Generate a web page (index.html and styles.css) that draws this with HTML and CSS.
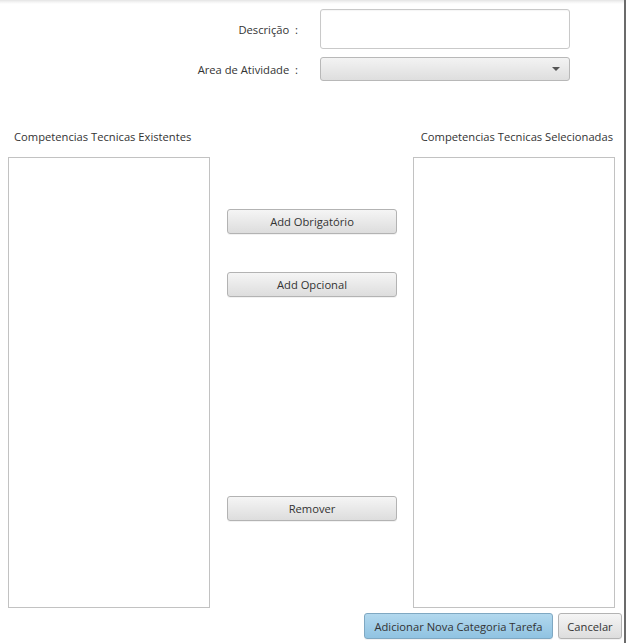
FILE: index.html
```html
<!DOCTYPE html>
<html>
<head>
<meta charset="utf-8">
<link rel="stylesheet" href="styles.css">
</head>
<body>
<div class="window">
  <div class="form">
    <label class="label label-desc">Descrição&nbsp; :</label>
    <div class="textfield"></div>
    <label class="label">Area de Atividade&nbsp; :</label>
    <div class="combo"><span class="arrow"></span></div>
  </div>

  <div class="headers">
    <div class="head head-left">Competencias Tecnicas Existentes</div>
    <div class="head head-right">Competencias Tecnicas Selecionadas</div>
  </div>

  <div class="lists">
    <div class="listview"></div>
    <div class="actions">
      <button class="btn btn-first">Add Obrigatório</button>
      <button class="btn btn-second">Add Opcional</button>
      <button class="btn btn-remove">Remover</button>
    </div>
    <div class="listview"></div>
  </div>

  <div class="footer">
    <button class="btn btn-default">Adicionar Nova Categoria Tarefa</button>
    <button class="btn btn-cancel">Cancelar</button>
  </div>
</div>
</body>
</html>
```

FILE: styles.css
```css
html, body {
  margin: 0;
  padding: 0;
  background: #ffffff;
}

body {
  font-family: "Open Sans", "Noto Sans", sans-serif;
  font-size: 11.2px;
  color: #333333;
}

.window {
  width: 624px;
  height: 643px;
  border-right: 2px solid #6b6b6b;
  background: linear-gradient(to bottom, #e4e4e4 0px, #f4f4f4 2px, #ffffff 4px);
  overflow: hidden;
}

.form {
  display: grid;
  grid-template-columns: 298px 250px;
  column-gap: 22px;
  row-gap: 8px;
  padding-top: 9px;
  align-items: center;
}

.label {
  text-align: right;
  white-space: nowrap;
}

.textfield {
  height: 38px;
  border: 1px solid #c9c9c9;
  border-radius: 3px;
  background: #ffffff;
  box-shadow: inset 0 1px 1px rgba(0,0,0,0.04);
}

.combo {
  position: relative;
  height: 22px;
  border: 1px solid #b8b8b8;
  border-radius: 3px;
  background: linear-gradient(to bottom, #f3f3f3, #dedede);
}

.arrow {
  position: absolute;
  right: 9px;
  top: 9px;
  width: 0;
  height: 0;
  border-left: 4px solid transparent;
  border-right: 4px solid transparent;
  border-top: 4px solid #555555;
}

.headers {
  display: flex;
  justify-content: space-between;
  padding: 0 11px 0 14px;
  margin-top: 48px;
  height: 16px;
  line-height: 16px;
}

.lists {
  display: flex;
  align-items: flex-start;
  padding-left: 8px;
  margin-top: 12px;
}

.listview {
  width: 200px;
  height: 449px;
  border: 1px solid #c2c2c2;
  background: #ffffff;
}

.actions {
  display: flex;
  flex-direction: column;
  width: 170px;
  margin: 0 16px 0 17px;
  padding-top: 52px;
}

.btn {
  font-family: inherit;
  font-size: 11.2px;
  color: #333333;
  height: 25px;
  padding: 0 8px;
  border: 1px solid #b3b3b3;
  border-radius: 3px;
  background: linear-gradient(to bottom, #f5f5f5, #dddddd);
  box-shadow: 0 1px 0 rgba(0,0,0,0.05);
  cursor: default;
}

.actions .btn {
  width: 170px;
}

.btn-second {
  margin-top: 38px;
}

.btn-remove {
  margin-top: 199px;
}

.footer {
  display: flex;
  justify-content: flex-end;
  gap: 5px;
  padding-right: 2px;
  margin-top: 5px;
}

.footer .btn {
  height: 26px;
  padding: 0 6px;
}

.btn-default {
  width: 189px;
  border-color: #7fa8c2;
  background: linear-gradient(to bottom, #b2d8ee, #90c3e2);
}

.btn-cancel {
  width: 64px;
}
```
